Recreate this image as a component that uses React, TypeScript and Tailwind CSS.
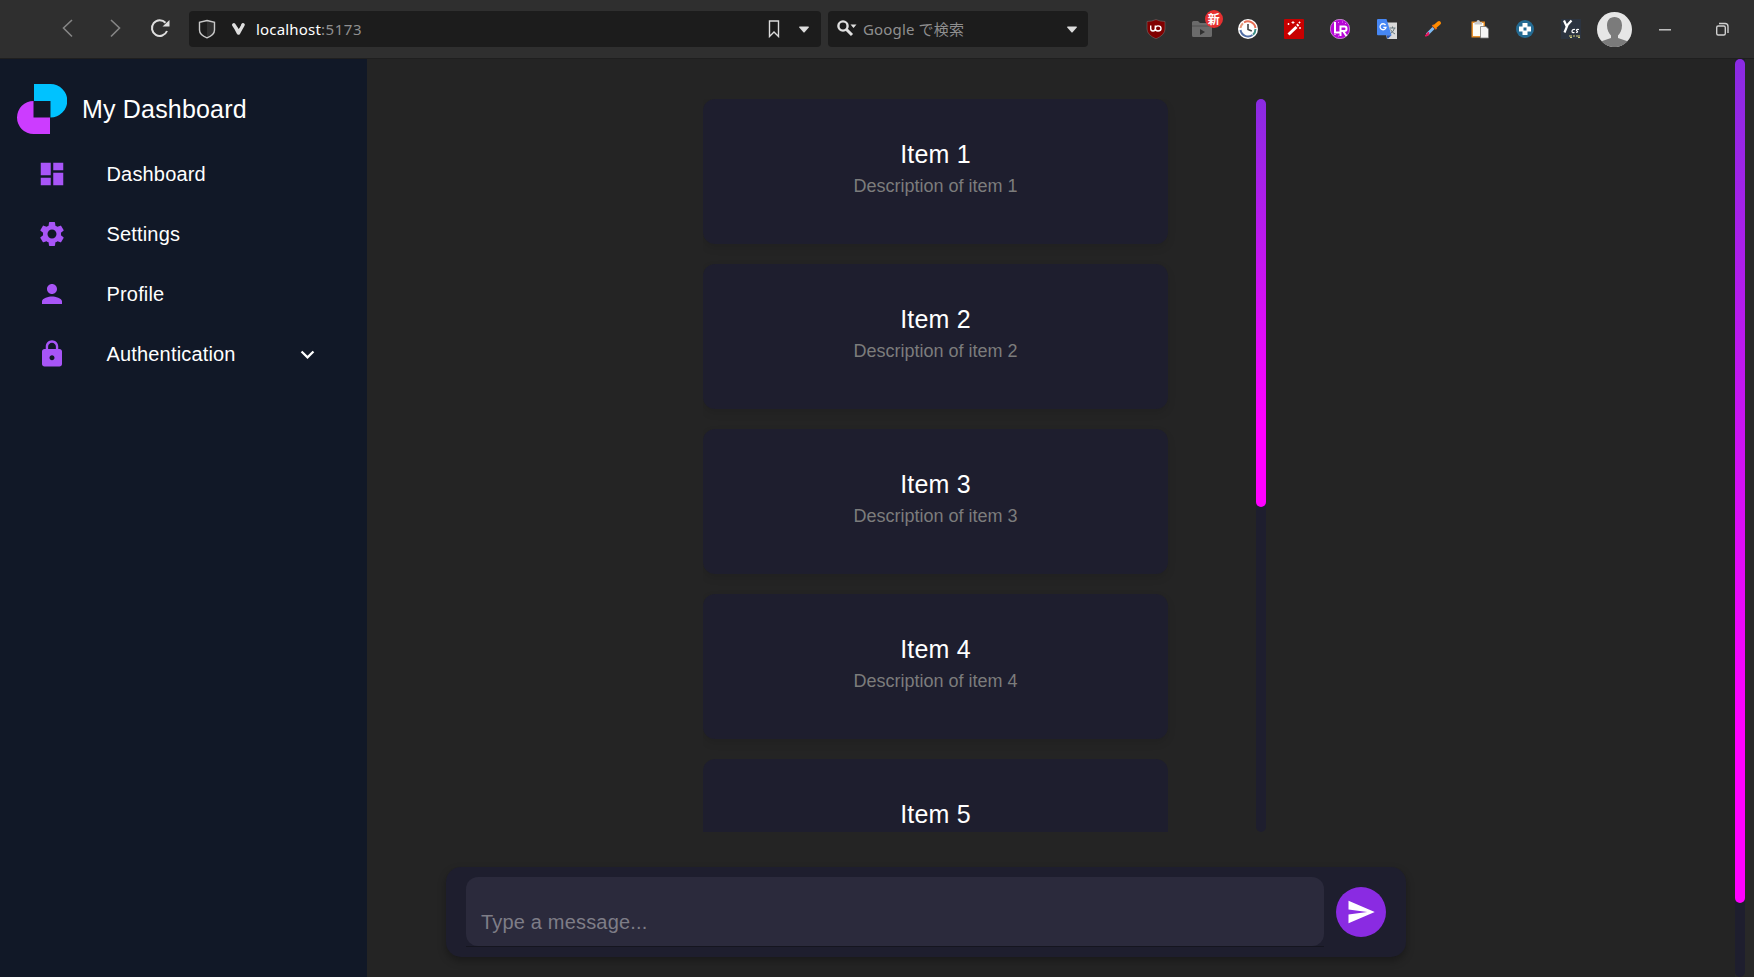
import type { ReactNode } from "react";
import { MdDashboard, MdSettings, MdPerson, MdLock, MdSend, MdExpandMore } from "react-icons/md";

function Caret() {
  return (
    <svg width="10" height="7" viewBox="0 0 10 7" fill="#dcdcdc" className="shrink-0">
      <path d="M0 1.2Q0 .5 .8 .5H9.2Q10 .5 10 1.2L5.6 6.2Q5 6.8 4.400 6.200Z" />
    </svg>
  );
}

function Slot({ children }: { children: ReactNode }) {
  return <div className="flex w-[46.2px] shrink-0 items-center justify-center">{children}</div>;
}

function BrowserBar() {
  return (
    <header className="flex h-[59px] shrink-0 items-center border-b border-[#1f1f1f] bg-[#2f2f2f]">
      <svg width="189" height="58" viewBox="0 0 189 58" fill="none" className="shrink-0">
        <path d="M72 20L63.500 28L72 36.500M111 20L119.500 28L111 36.500" stroke="#858585" strokeWidth="1.600" />
        <path d="M165.500 22.800A7.800 7.800 0 1 0 167 31" stroke="#dedede" strokeWidth="2" />
        <path d="M169.500 20V26.500H162.500Z" fill="#dedede" />
      </svg>
      <div className="flex h-[36px] w-[632px] shrink-0 items-center rounded-[4px] bg-[#1c1c1c]">
        <svg width="67" height="36" viewBox="0 0 67 36" fill="none" className="shrink-0">
          <path d="M18 10L25.500 12V22.500L18 27Z" fill="#303030" />
          <path d="M18 9.500L25.500 11.300V19Q25.500 24 18 26.800Q10.500 24 10.500 19V11.300Z" stroke="#c9c9c9" strokeWidth="1.400" />
          <path d="M44.800 13.800Q47.300 17 49.500 22Q51.500 18 54 13.800" stroke="#dedede" strokeWidth="3.600" strokeLinecap="round" strokeLinejoin="round" />
          <path d="M47 12L50 17.500L51.800 14.500L49.800 10.500Z" fill="#1c1c1c" />
        </svg>
        <div className="flex-1 text-[15px] text-[#8f8f8f] font-['Noto_Sans','Noto_Sans_CJK_JP',sans-serif]">
          <span className="inline-block tracking-[.18px]"><span className="text-white">localhost</span><span className="tracking-[.55px]">:5173</span></span>
        </div>
        <svg width="12" height="18" viewBox="0 0 12 18" fill="none" className="mr-[19px]">
          <path d="M1.500 1H10.500V16.500L6 12L1.500 16.500Z" stroke="#dcdcdc" strokeWidth="1.400" />
        </svg>
        <div className="mr-[12px] flex"><Caret /></div>
      </div>
      <div className="ml-[7px] flex h-[36px] w-[260px] shrink-0 items-center rounded-[4px] bg-[#1c1c1c]">
        <svg width="20" height="18" viewBox="0 0 20 18" className="ml-[9px] shrink-0" fill="none">
          <circle cx="6" cy="6" r="4.600" stroke="#e0e0e0" strokeWidth="2.400" />
          <path d="M9.500 9.500L15 15" stroke="#e0e0e0" strokeWidth="3" />
          <path d="M13.500 4.500H19.500L16.500 8Z" fill="#e0e0e0" />
        </svg>
        <div className="ml-[6px] flex-1 text-[15px] tracking-[.15px] text-[#8f8f8f] font-['Noto_Sans','Noto_Sans_CJK_JP',sans-serif]">Google で検索</div>
        <div className="mr-[11px] flex"><Caret /></div>
      </div>
      <div className="ml-[44.6px] flex shrink-0 items-center">
        <Slot>
          <svg width="20" height="20" viewBox="0 0 20 20">
            <path d="M10 .5Q14 2.500 19 2.500V10Q19 16 10 19.800Q1 16 1 10V2.500Q6 2.500 10 .5Z" fill="#800000" stroke="#777" strokeWidth=".5" />
            <path d="M4.700 6.500V9.500Q4.700 12 7 12Q9.300 12 9.300 9.500V6.500M9.300 9.500Q9.300 6.900 12 6.900Q15 6.900 15 9.500Q15 12 12 12Q9.300 12 9.300 9.500" fill="none" stroke="#fff" strokeWidth="1.400" />
          </svg>
        </Slot>
        <Slot>
          <div className="relative">
            <svg width="20" height="20" viewBox="0 0 20 20">
              <path d="M0 3.500Q0 2 1.500 2H6L8 4H18.500Q20 4 20 5.500V16.500Q20 18 18.500 18H1.500Q0 18 0 16.500Z" fill="#6b6b6b" />
              <path d="M0 7H20" stroke="#505050" /><path d="M8 10L13 13L8 16Z" fill="#303030" />
            </svg>
            <span className="absolute -top-[9px] left-[13px] flex size-[18px] items-center justify-center rounded-full bg-[#e53030] text-[12px] leading-none font-bold text-white font-['Noto_Sans_CJK_JP',sans-serif]">新</span>
          </div>
        </Slot>
        <Slot>
          <svg width="20" height="20" viewBox="0 0 20 20" fill="none">
            <circle cx="10" cy="10" r="10" fill="#fff" />
            <path d="M2.500 9A7.600 7.600 0 0 1 5 4.200" stroke="#e69a7b" strokeWidth="2" />
            <path d="M6 3.500A7.600 7.600 0 0 1 17.500 9" stroke="#e66f55" strokeWidth="2" />
            <path d="M17.500 10A7.600 7.600 0 0 1 15 15.700" stroke="#3e8e86" strokeWidth="2" />
            <path d="M14.500 16A7.600 7.600 0 0 1 2.500 11" stroke="#526fa5" strokeWidth="2" />
            <path d="M10 5V10.500L13.800 12" stroke="#444" strokeWidth="1.600" />
          </svg>
        </Slot>
        <Slot>
          <svg width="20" height="20" viewBox="0 0 20 20">
            <rect width="20" height="20" rx="1" fill="#c80000" />
            <path d="M4.500 15.500L12.500 8" stroke="#fff" strokeWidth="3" />
            <path d="M13 6.800L14.500 5.500" stroke="#fff" strokeWidth="2.500" />
            <path d="M9 2V5M7.500 3.500H10.500M4.500 4V6M3.500 5H5.500M15.500 2.500V4.500M14.500 3.500H16.500M16 8V10M15 9H17" stroke="#fff" strokeWidth=".9" />
          </svg>
        </Slot>
        <Slot>
          <svg width="20" height="20" viewBox="0 0 20 20" fill="none">
            <circle cx="10" cy="10" r="9.700" fill="#b606d6" stroke="#e7a9ef" strokeWidth=".7" />
            <path d="M5 3V13.500H10M10.500 17V7.500H14.500Q16.500 7.500 16.500 9.700Q16.500 12 14.500 12H11M13 12L16.500 17" stroke="#fff" strokeWidth="2" />
            <path d="M8 3.500h1M12 3h1M4 15.500h2M8 17h1M15 4.500h1" stroke="#e58bf0" />
          </svg>
        </Slot>
        <Slot>
          <svg width="20" height="20" viewBox="0 0 20 20" fill="none">
            <path d="M7 3.500H20V20H10Z" fill="#dadada" />
            <path d="M0 1Q0 0 1 0H9.500L14.500 16.300H1Q0 16.300 0 15.300Z" fill="#4687f4" />
            <path d="M10.500 20L14.500 16.300H9.500Z" fill="#2858b8" />
            <path d="M8.500 6A3 3 0 1 0 9 8.300H6.300" stroke="#fff" strokeWidth="1.300" />
            <path d="M12.500 9H18.500M15.500 7.500V9M17.500 9Q16.500 13 13.500 14.500M13.500 10.500Q15 13.500 18 15" stroke="#66777d" strokeWidth="1" />
          </svg>
        </Slot>
        <Slot>
          <svg width="20" height="20" viewBox="0 0 20 20" fill="none">
            <path d="M4 15.500L10.500 9" stroke="#7db9f2" strokeWidth="3" />
            <path d="M2 17L5.500 13L6 15.500Q4 17.500 2 17Z" fill="#e9165c" stroke="#e9165c" />
            <path d="M9.500 6L13.500 10" stroke="#ee6a16" strokeWidth="2" />
            <path d="M12.500 7L16 4" stroke="#ff8c00" strokeWidth="4" strokeLinecap="round" />
          </svg>
        </Slot>
        <Slot>
          <svg width="20" height="20" viewBox="0 0 20 20">
            <rect x="3.200" y="3.200" width="12" height="14.600" fill="#fffdf5" stroke="#e88b20" strokeWidth="1.400" />
            <path d="M5.500 5.500V3H7.500Q7.500 1 9.200 1T11 3H13V5.500Z" fill="#c9c9c9" />
            <path d="M11.500 7.500H17L19.500 10V19H11.500Z" fill="#f5f5f5" stroke="#777" strokeWidth=".8" />
          </svg>
        </Slot>
        <Slot>
          <svg width="20" height="20" viewBox="0 0 20 20">
            <circle cx="10" cy="10" r="9" fill="#246b93" />
            <path d="M7.500 4H12.500V7.500H16V12.500H12.500V16H7.500V12.500H4V7.500H7.500Z" fill="#fff" />
            <rect x="8.500" y="8.500" width="3" height="3" fill="#246b93" />
          </svg>
        </Slot>
        <Slot>
          <svg width="20" height="20" viewBox="0 0 20 20" fill="none">
            <rect width="20" height="20" fill="#2c3440" />
            <path d="M3 1.500L5.500 7L10.500 1.500M6.500 6L3.500 13.500" stroke="#fff" strokeWidth="2.200" />
            <path d="M14 10.500Q11 10 11 12.500Q11 14 13.500 13.500M18 10.500Q15 10 15.500 11.500Q18 13 15 13.500" stroke="#fff" strokeWidth="1.200" />
            <path d="M8 17H11M12 17H14M15 17H19M9 18.500h2M17 18.500h2" stroke="#d4cf80" strokeWidth="1.200" />
          </svg>
        </Slot>
      </div>
      <svg width="35" height="35" viewBox="0 0 35 35" className="ml-[2.4px] shrink-0">
        <circle cx="17.500" cy="17.500" r="17.500" fill="#e6e6e6" />
        <path d="M17.500 5C22.500 5 25 8.500 25 13.500C25 18 23 21.500 21 23.500V26L30.500 29.300A17.500 17.500 0 0 1 4.500 29.300L14 26V23.500C12 21.500 10 18 10 13.500C10 8.500 12.500 5 17.500 5Z" fill="#7b7b7b" />
      </svg>
      <svg width="122" height="58" viewBox="0 0 122 58" fill="none" className="shrink-0">
        <path d="M27 29.800H39" stroke="#cfcfcf" strokeWidth="1.400" />
        <rect x="84.700" y="26" width="8.600" height="9" rx="1.500" stroke="#cfcfcf" strokeWidth="1.400" />
        <path d="M87 23.500H93Q96 23.500 96 26.500V33" stroke="#cfcfcf" strokeWidth="1.400" />
      </svg>
    </header>
  );
}

const nav = [
  { label: "Dashboard", Icon: MdDashboard },
  { label: "Settings", Icon: MdSettings },
  { label: "Profile", Icon: MdPerson },
  { label: "Authentication", Icon: MdLock, expandable: true },
];

function Sidebar() {
  return (
    <aside className="w-[367px] shrink-0 bg-[#111827] text-white">
      <div className="flex h-[85px] items-center pt-[15px] pl-[17px]">
        <svg width="50" height="50" viewBox="0 0 50 50" className="shrink-0">
          <path d="M17 0H33.500A16.500 16.500 0 0 1 33.500 33.500V17H17Z" fill="#00c2ff" />
          <path d="M16.500 17V33.500H33V50H16.500A16.500 16.500 0 0 1 16.500 17Z" fill="#cc3cff" />
        </svg>
        <h1 className="ml-[15px] pt-px text-[25px] tracking-[.18px]">My Dashboard</h1>
      </div>
      <nav>
        {nav.map(({ label, Icon, expandable }) => (
          <a key={label} className="flex h-[60px] items-center pl-[37px]">
            <Icon size={30} color="#a855f7" className="shrink-0" />
            <span className="ml-[39.500px] w-[185px] text-[20px] tracking-[.17px]">{label}</span>
            {expandable && <MdExpandMore size={27} className="ml-[2px]" />}
          </a>
        ))}
      </nav>
    </aside>
  );
}

function MessageList() {
  return (
    <section className="flex h-[733px] w-[563px] gap-[88px] overflow-hidden">
      <ul className="flex w-[465px] shrink-0 flex-col gap-[20px]">
        {[1, 2, 3, 4].map((n) => (
          <li
            key={n}
            className="flex h-[145px] shrink-0 flex-col items-center rounded-[12px] bg-[#1e1e2e] pt-[37px] shadow-[0_4px_8px_rgba(0,0,0,0.1)]"
          >
            <h2 className="text-[25px] leading-[37px] tracking-[.2px] text-white">Item {n}</h2>
            <p className="text-[18px] leading-[26px] text-[#7c7c7c]">Description of item {n}</p>
          </li>
        ))}
        <li className="flex h-[73px] shrink-0 flex-col items-center rounded-t-[12px] bg-[#1e1e2e] pt-[37px]">
          <h2 className="text-[25px] leading-[36px] tracking-[.2px] text-white">Item 5</h2>
        </li>
      </ul>
      <div className="w-[10px] shrink-0 rounded-full bg-[#1e1e2e]">
        <div className="h-[408px] rounded-full bg-[linear-gradient(#8a2be2,#ff00ff_80%)]" />
      </div>
    </section>
  );
}

function Composer() {
  return (
    <form className="flex h-[90px] w-[960px] items-center rounded-[15px] bg-[#1e1e2e] px-[20px] shadow-[0_4px_8px_rgba(0,0,0,0.3)]">
      <div className="h-[70px] w-[858px] border-b border-[#15151f]">
        <div className="flex h-[69px] items-center rounded-[12px] bg-[#2b2a3c] pt-[21px] pl-[15px] text-[20px] text-[#7e7d87]">
          <span className="tracking-[.18px]">Type a message...</span>
        </div>
      </div>
      <button type="button" className="ml-[12px] flex size-[50px] items-center justify-center rounded-full bg-[#8a2be2] text-white">
        <MdSend size={30} />
      </button>
    </form>
  );
}

export default function App() {
  return (
    <div className="flex h-[977px] w-[1754px] flex-col overflow-hidden bg-[#242424] font-['Liberation_Sans',Arial,sans-serif]">
      <BrowserBar />
      <div className="flex min-h-0 flex-1">
        <Sidebar />
        <main className="flex flex-1 flex-col">
          <div className="pt-[40px] pl-[336px]">
            <MessageList />
          </div>
          <div className="mt-[35px] pl-[79px]">
            <Composer />
          </div>
        </main>
        <div className="w-[19px] shrink-0 bg-[#282828]">
          <div className="h-full w-[10px] rounded-b-full bg-[#1e1e2e]">
            <div className="h-[844px] rounded-full bg-[linear-gradient(#8a2be2,#ff00ff_80%)]" />
          </div>
        </div>
      </div>
    </div>
  );
}
